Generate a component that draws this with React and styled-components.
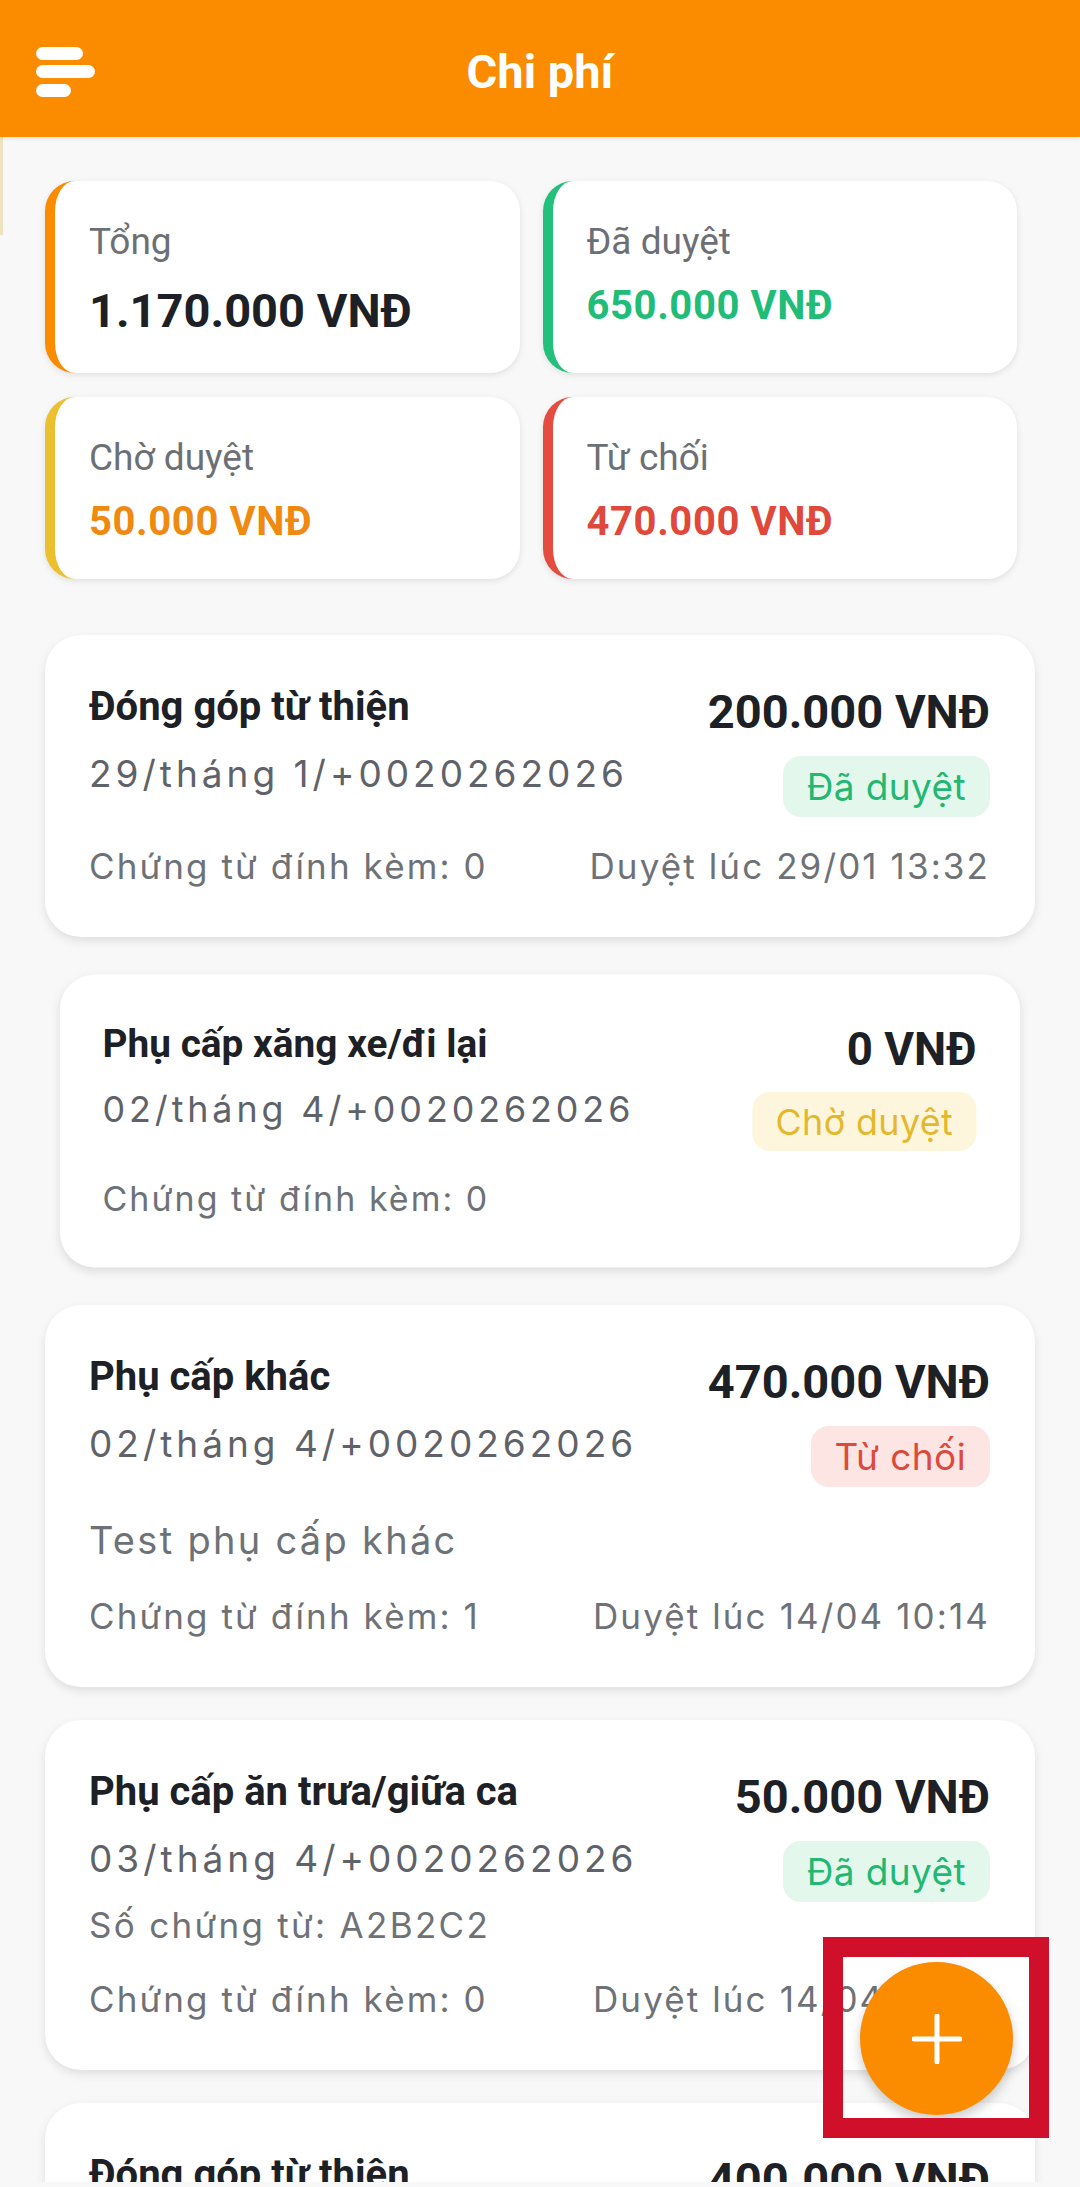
import React from 'react';
import styled, { createGlobalStyle } from 'styled-components';

const GlobalStyle = createGlobalStyle`
  html, body {
    margin: 0;
    padding: 0;
    background: #f8f8f8;
  }
  * {
    box-sizing: border-box;
  }
`;

const TONES = {
  total: { border: '#fb8c00', value: '#1d2126' },
  approved: { border: '#22c07a', value: '#21bd78', badgeBg: '#e4f7ed', badgeText: '#22b872' },
  pending: { border: '#ecbf2e', value: '#f0890f', badgeBg: '#fdf6dd', badgeText: '#e5b82c' },
  rejected: { border: '#e34c3e', value: '#df483a', badgeBg: '#fde5e3', badgeText: '#dc4a3d' },
};

const summary = [
  { key: 'total', label: 'Tổng', value: '1.170.000 VNĐ', big: true },
  { key: 'approved', label: 'Đã duyệt', value: '650.000 VNĐ' },
  { key: 'pending', label: 'Chờ duyệt', value: '50.000 VNĐ' },
  { key: 'rejected', label: 'Từ chối', value: '470.000 VNĐ' },
];

const expenses = [
  {
    id: 1,
    title: 'Đóng góp từ thiện',
    amount: '200.000 VNĐ',
    date: '29/tháng 1/+0020262026',
    status: 'approved',
    attachments: 0,
    reviewed: 'Duyệt lúc 29/01 13:32',
  },
  {
    id: 2,
    title: 'Phụ cấp xăng xe/đi lại',
    amount: '0 VNĐ',
    date: '02/tháng 4/+0020262026',
    status: 'pending',
    attachments: 0,
    pressed: true,
  },
  {
    id: 3,
    title: 'Phụ cấp khác',
    amount: '470.000 VNĐ',
    date: '02/tháng 4/+0020262026',
    status: 'rejected',
    note: 'Test phụ cấp khác',
    attachments: 1,
    reviewed: 'Duyệt lúc 14/04 10:14',
  },
  {
    id: 4,
    title: 'Phụ cấp ăn trưa/giữa ca',
    amount: '50.000 VNĐ',
    date: '03/tháng 4/+0020262026',
    voucher: 'Số chứng từ: A2B2C2',
    status: 'approved',
    attachments: 0,
    reviewed: 'Duyệt lúc 14/04 10:14',
  },
  {
    id: 5,
    title: 'Đóng góp từ thiện',
    amount: '400.000 VNĐ',
    date: '14/tháng 4/+0020262026',
    status: 'approved',
    attachments: 0,
    reviewed: 'Duyệt lúc 14/04 10:20',
  },
];

const STATUS_LABEL = {
  approved: 'Đã duyệt',
  pending: 'Chờ duyệt',
  rejected: 'Từ chối',
};

const Styled = {
  Screen: styled.div`
    position: relative;
    width: 1080px;
    height: 2182px;
    overflow: hidden;
    background: #f8f8f8;
    font-family: Roboto, 'Noto Sans', sans-serif;
  `,
  AppBar: styled.header`
    height: 137px;
    background: #fb8c00;
    display: grid;
    grid-template-columns: 1fr auto 1fr;
    align-items: center;
    box-shadow: 0 2px 4px rgba(0, 0, 0, 0.08);
    position: relative;
    z-index: 2;
  `,
  MenuButton: styled.div`
    align-self: start;
    margin: 47px 0 0 36px;
    width: 60px;
    height: 50px;
  `,
  Title: styled.h1`
    margin: 0;
    padding-top: 6px;
    font-size: 47px;
    font-weight: 700;
    color: #ffffff;
    line-height: 56px;
  `,
  DrawerEdge: styled.div`
    position: absolute;
    left: 0;
    top: 137px;
    width: 3px;
    height: 98px;
    background: #efe2bf;
  `,
  Content: styled.main`
    padding: 44px 45px 0 45px;
  `,
  SummaryGrid: styled.div`
    display: grid;
    grid-template-columns: 1fr 1fr;
    gap: 24px 23px;
    padding-right: 18px;
    margin-bottom: 56px;
  `,
  SummaryCard: styled.div`
    background: #ffffff;
    border-left: 10px solid ${p => TONES[p.tone].border};
    border-radius: 30px;
    box-shadow: 0 2px 6px rgba(0, 0, 0, 0.1);
    padding: 39px 24px 33px 34px;
    display: flex;
    flex-direction: column;
    gap: 18px;
  `,
  SummaryLabel: styled.div`
    font-size: 37px;
    line-height: 44px;
    color: #6c7075;
  `,
  SummaryValue: styled.div`
    font-size: ${p => (p.big ? '47px' : '40px')};
    line-height: ${p => (p.big ? '58px' : '48px')};
    letter-spacing: ${p => (p.big ? '0' : '0.6px')};
    font-weight: 700;
    color: ${p => TONES[p.tone].value};
  `,
  List: styled.div`
    display: flex;
    flex-direction: column;
    gap: 33px;
  `,
  ExpenseCard: styled.div`
    background: #ffffff;
    border-radius: 36px;
    box-shadow: 0 4px 10px rgba(0, 0, 0, 0.1);
    padding: 46px 45px 46px 44px;
    display: flex;
    flex-direction: column;
    transform: ${p => (p.pressed ? 'scale(0.97)' : 'none')};
  `,
  TopRow: styled.div`
    display: flex;
    justify-content: space-between;
    align-items: flex-start;
  `,
  LeftCol: styled.div`
    display: flex;
    flex-direction: column;
    gap: 16px;
  `,
  RightCol: styled.div`
    display: flex;
    flex-direction: column;
    align-items: flex-end;
  `,
  ExpenseTitle: styled.div`
    font-size: 40px;
    line-height: 52px;
    font-weight: 700;
    color: #1d2126;
  `,
  DateText: styled.div`
    font-family: Inter, 'Noto Sans', sans-serif;
    font-size: 37px;
    line-height: 50px;
    letter-spacing: 4px;
    color: #5f6369;
  `,
  MetaText: styled.div`
    font-family: Inter, 'Noto Sans', sans-serif;
    font-size: ${p => (p.large ? '38px' : '35px')};
    line-height: 50px;
    letter-spacing: 2.3px;
    color: #6e7277;
    margin-top: ${p => p.offset || 0}px;
  `,
  Amount: styled.div`
    font-size: 47px;
    line-height: 62px;
    font-weight: 700;
    color: #1d2126;
  `,
  Badge: styled.div`
    margin-top: 13px;
    height: 61px;
    padding: 0 24px;
    border-radius: 18px;
    background: ${p => TONES[p.status].badgeBg};
    color: ${p => TONES[p.status].badgeText};
    font-family: Inter, 'Noto Sans', sans-serif;
    font-size: 37px;
    line-height: 61px;
    letter-spacing: 0.4px;
  `,
  Footer: styled.div`
    display: flex;
    justify-content: space-between;
    margin-top: ${p => (p.afterNote ? 26 : 24)}px;
    font-family: Inter, 'Noto Sans', sans-serif;
    font-size: 35px;
    line-height: 50px;
    letter-spacing: 2.1px;
    color: #6e7277;
  `,
  Fab: styled.button`
    position: absolute;
    left: 860px;
    top: 1962px;
    width: 153px;
    height: 153px;
    border: none;
    border-radius: 50%;
    background: #fb8c00;
    box-shadow: 0 6px 12px rgba(0, 0, 0, 0.2);
    display: flex;
    align-items: center;
    justify-content: center;
    padding: 0;
    z-index: 3;
  `,
  Highlight: styled.div`
    position: absolute;
    left: 823px;
    top: 1937px;
    width: 226px;
    height: 201px;
    border: 20px solid #d0102a;
    z-index: 4;
  `,
};

function MenuIcon() {
  return (
    <svg width="60" height="50" viewBox="0 0 60 50">
      <rect x="0" y="0" width="47" height="13" rx="6.5" fill="#ffffff" />
      <rect x="0" y="18" width="59" height="13" rx="6.5" fill="#ffffff" />
      <rect x="0" y="37" width="35" height="13" rx="6.5" fill="#ffffff" />
    </svg>
  );
}

function PlusIcon() {
  return (
    <svg width="50" height="50" viewBox="0 0 50 50">
      <path d="M25 2 V48 M2 25 H48" stroke="#ffffff" strokeWidth="5" strokeLinecap="round" />
    </svg>
  );
}

function ExpenseItem({ item }) {
  return (
    <Styled.ExpenseCard pressed={item.pressed}>
      <Styled.TopRow>
        <Styled.LeftCol>
          <Styled.ExpenseTitle>{item.title}</Styled.ExpenseTitle>
          <Styled.DateText>{item.date}</Styled.DateText>
          {item.voucher && <Styled.MetaText>{item.voucher}</Styled.MetaText>}
        </Styled.LeftCol>
        <Styled.RightCol>
          <Styled.Amount>{item.amount}</Styled.Amount>
          <Styled.Badge status={item.status}>{STATUS_LABEL[item.status]}</Styled.Badge>
        </Styled.RightCol>
      </Styled.TopRow>
      {item.note && <Styled.MetaText large offset={28}>{item.note}</Styled.MetaText>}
      <Styled.Footer afterNote={!!item.note}>
        <span>Chứng từ đính kèm: {item.attachments}</span>
        {item.reviewed && <span>{item.reviewed}</span>}
      </Styled.Footer>
    </Styled.ExpenseCard>
  );
}

function App() {
  return (
    <Styled.Screen>
      <GlobalStyle />
      <Styled.AppBar>
        <Styled.MenuButton>
          <MenuIcon />
        </Styled.MenuButton>
        <Styled.Title>Chi phí</Styled.Title>
        <div />
      </Styled.AppBar>
      <Styled.DrawerEdge />

      <Styled.Content>
        <Styled.SummaryGrid>
          {summary.map(s => (
            <Styled.SummaryCard key={s.key} tone={s.key}>
              <Styled.SummaryLabel>{s.label}</Styled.SummaryLabel>
              <Styled.SummaryValue tone={s.key} big={s.big}>{s.value}</Styled.SummaryValue>
            </Styled.SummaryCard>
          ))}
        </Styled.SummaryGrid>

        <Styled.List>
          {expenses.map(item => (
            <ExpenseItem key={item.id} item={item} />
          ))}
        </Styled.List>
      </Styled.Content>

      <Styled.Fab aria-label="Thêm chi phí">
        <PlusIcon />
      </Styled.Fab>
      <Styled.Highlight />
    </Styled.Screen>
  );
}

export default App;
